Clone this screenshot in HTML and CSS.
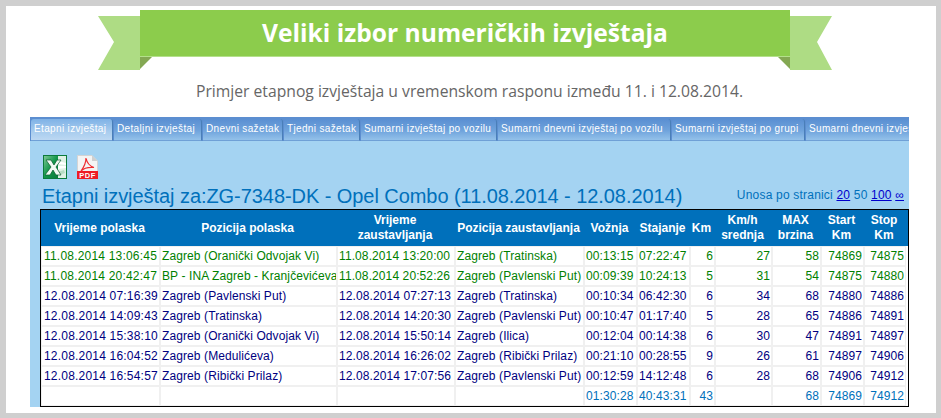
FILE: index.html
```html
<!DOCTYPE html>
<html lang="hr">
<head>
    <meta charset="UTF-8">
    <meta name="viewport" content="width=device-width, initial-scale=1.0">
    <title>Veliki izbor numeričkih izvještaja</title>
    <link rel="stylesheet" href="styles.css">
</head>
<body>
    <div class="sheet">
        <div class="banner">
            <svg class="tail tail-left" width="42" height="54" viewBox="0 0 42 54">
                <polygon points="0,0 42,0 42,54 0,54 16,26" fill="#aedc84"/>
            </svg>
            <svg class="tail tail-right" width="42" height="54" viewBox="0 0 42 54">
                <polygon points="0,0 42,0 27,26 42,54 0,54" fill="#aedc84"/>
            </svg>
            <svg class="fold fold-left" width="12" height="12" viewBox="0 0 12 12">
                <polygon points="0,0 12,0 0,12" fill="#84a853"/>
            </svg>
            <svg class="fold fold-right" width="12" height="12" viewBox="0 0 12 12">
                <polygon points="0,0 12,0 12,12" fill="#84a853"/>
            </svg>
            <h1>Veliki izbor numeričkih izvještaja</h1>
        </div>
        <p class="lead">Primjer etapnog izvještaja u vremenskom rasponu između 11. i 12.08.2014.</p>

        <div class="panel">
            <div class="tabs">
                <div class="tab active">Etapni izvještaj</div>
                <div class="tab w-detail">Detaljni izvještaj</div>
                <div class="tab w-day">Dnevni sažetak</div>
                <div class="tab w-week">Tjedni sažetak</div>
                <div class="tab w-vehicle">Sumarni izvještaj po vozilu</div>
                <div class="tab w-dayvehicle">Sumarni dnevni izvještaj po vozilu</div>
                <div class="tab w-group">Sumarni izvještaj po grupi</div>
                <div class="tab w-last">Sumarni dnevni izvještaj</div>
            </div>

            <div class="exports">
                <svg width="24" height="24" viewBox="0 0 24 24">
                    <defs>
                        <linearGradient id="xls" x1="0" y1="0" x2="1" y2="1">
                            <stop offset="0" stop-color="#7cc894"/>
                            <stop offset="0.5" stop-color="#12964a"/>
                            <stop offset="1" stop-color="#0b7a3c"/>
                        </linearGradient>
                    </defs>
                    <rect x="0.5" y="0.5" width="23" height="23" fill="#dff0e4" stroke="#0b7a3c"/>
                    <rect x="1" y="1" width="14" height="22" fill="url(#xls)"/>
                    <polygon points="15,6 23,8 23,10 15,9" fill="#ffffff"/>
                    <polygon points="15,11 23,11 23,13 15,14" fill="#ffffff"/>
                    <polygon points="15,17 21,15 22,18 16,20" fill="#b8dcc4"/>
                    <polygon points="3,5 8,5 11,10 14,5 18,5 13,12 18,20 13,20 10,15 7,20 2,20 8,12" fill="#f2faf4" stroke="#0a5c2e" stroke-width="0.7"/>
                </svg>
                <svg width="21" height="24" viewBox="0 0 21 24">
                    <polygon points="0.5,0.5 15,0.5 20.5,6 20.5,23.5 0.5,23.5" fill="#f4f4f4" stroke="#d4d4d4"/>
                    <polygon points="15,0.5 15,6 20.5,6" fill="#cfcfcf"/>
                    <path d="M9 3 C10 8 12 11 17 12.5 C12 12 7 13 4 16 C7 12 9 8 9 3 Z" fill="none" stroke="#ee2b2f" stroke-width="1.2"/>
                    <rect x="0" y="16" width="21" height="8" fill="#ee1c25"/>
                    <text class="pdf-label" x="10.5" y="23">PDF</text>
                </svg>
            </div>

            <div class="heading">
                <h2>Etapni izvještaj za:ZG-7348-DK - Opel Combo (11.08.2014 - 12.08.2014)</h2>
                <div class="paging">Unosa po stranici <a href="#">20</a> 50 <a href="#">100</a> <a href="#">∞</a></div>
            </div>

            <table class="report">
                <colgroup>
                    <col class="c-start"><col class="c-from"><col class="c-stop"><col class="c-to">
                    <col class="c-drive"><col class="c-idle"><col class="c-km"><col class="c-avg">
                    <col class="c-max"><col class="c-skm"><col class="c-ekm"><col class="c-end">
                </colgroup>
                <tr>
                    <th>Vrijeme polaska</th><th>Pozicija polaska</th><th>Vrijeme zaustavljanja</th><th>Pozicija zaustavljanja</th>
                    <th>Vožnja</th><th>Stajanje</th><th>Km</th><th>Km/h srednja</th><th>MAX brzina</th><th>Start Km</th><th>Stop Km</th><th class="end"></th>
                </tr>
                <tr class="green">
                    <td class="date">11.08.2014 13:06:45</td><td>Zagreb (Oranički Odvojak Vi)</td><td>11.08.2014 13:20:00</td><td>Zagreb (Tratinska)</td>
                    <td>00:13:15</td><td>07:22:47</td><td class="num">6</td><td class="num">27</td><td class="num">58</td><td class="num">74869</td><td class="num">74875</td><td class="end"></td>
                </tr>
                <tr class="green">
                    <td class="date">11.08.2014 20:42:47</td><td>BP - INA Zagreb - Kranjčevićeva</td><td>11.08.2014 20:52:26</td><td>Zagreb (Pavlenski Put)</td>
                    <td>00:09:39</td><td>10:24:13</td><td class="num">5</td><td class="num">31</td><td class="num">54</td><td class="num">74875</td><td class="num">74880</td><td class="end"></td>
                </tr>
                <tr>
                    <td class="date">12.08.2014 07:16:39</td><td>Zagreb (Pavlenski Put)</td><td>12.08.2014 07:27:13</td><td>Zagreb (Tratinska)</td>
                    <td>00:10:34</td><td>06:42:30</td><td class="num">6</td><td class="num">34</td><td class="num">68</td><td class="num">74880</td><td class="num">74886</td><td class="end"></td>
                </tr>
                <tr>
                    <td class="date">12.08.2014 14:09:43</td><td>Zagreb (Tratinska)</td><td>12.08.2014 14:20:30</td><td>Zagreb (Pavlenski Put)</td>
                    <td>00:10:47</td><td>01:17:40</td><td class="num">5</td><td class="num">28</td><td class="num">65</td><td class="num">74886</td><td class="num">74891</td><td class="end"></td>
                </tr>
                <tr>
                    <td class="date">12.08.2014 15:38:10</td><td>Zagreb (Oranički Odvojak Vi)</td><td>12.08.2014 15:50:14</td><td>Zagreb (Ilica)</td>
                    <td>00:12:04</td><td>00:14:38</td><td class="num">6</td><td class="num">30</td><td class="num">47</td><td class="num">74891</td><td class="num">74897</td><td class="end"></td>
                </tr>
                <tr>
                    <td class="date">12.08.2014 16:04:52</td><td>Zagreb (Medulićeva)</td><td>12.08.2014 16:26:02</td><td>Zagreb (Ribički Prilaz)</td>
                    <td>00:21:10</td><td>00:28:55</td><td class="num">9</td><td class="num">26</td><td class="num">61</td><td class="num">74897</td><td class="num">74906</td><td class="end"></td>
                </tr>
                <tr>
                    <td class="date">12.08.2014 16:54:57</td><td>Zagreb (Ribički Prilaz)</td><td>12.08.2014 17:07:56</td><td>Zagreb (Pavlenski Put)</td>
                    <td>00:12:59</td><td>14:12:48</td><td class="num">6</td><td class="num">28</td><td class="num">68</td><td class="num">74906</td><td class="num">74912</td><td class="end"></td>
                </tr>
                <tr class="totals">
                    <td></td><td></td><td></td><td></td>
                    <td>01:30:28</td><td>40:43:31</td><td class="num">43</td><td></td><td class="num">68</td><td class="num">74869</td><td class="num">74912</td><td class="end"></td>
                </tr>
            </table>
        </div>
    </div>
</body>
</html>
```

FILE: styles.css
```css
html, body {
    margin: 0;
    padding: 0;
}

body {
    width: 941px;
    height: 418px;
    overflow: hidden;
    background-color: #cfcfcf;
    font-family: "Liberation Sans", Arial, sans-serif;
}

.sheet {
    box-sizing: border-box;
    width: 930px;
    height: 407px;
    margin: 6px 0 0 6px;
    padding-top: 4px;
    background-color: #fff;
    overflow: hidden;
}

.banner {
    position: relative;
    width: 650px;
    height: 47px;
    margin-left: 134px;
    background-color: #8ccc4c;
    border-bottom: 1px solid #b4e08c;
    box-sizing: border-box;
}

.banner h1 {
    margin: 0;
    color: #fff;
    font-family: "Open Sans", sans-serif;
    font-size: 24.6px;
    font-weight: 700;
    line-height: 45px;
    text-align: center;
}

.tail {
    position: absolute;
    top: 6px;
}

.tail-left {
    left: -42px;
}

.tail-right {
    right: -42px;
}

.fold {
    position: absolute;
    top: 47px;
}

.fold-left {
    left: 0;
}

.fold-right {
    right: 0;
}

.lead {
    margin: 23px 3px 0 0;
    color: #666;
    font-family: "Open Sans", sans-serif;
    font-size: 15.7px;
    line-height: 22px;
    text-align: center;
}

.panel {
    width: 879px;
    height: 290px;
    margin: 15px 0 0 24px;
    background-color: #a4d3f2;
    overflow: hidden;
}

.tabs {
    display: flex;
    height: 24px;
    padding-left: 1px;
    border-top: 2px solid #5c8ed0;
    box-sizing: border-box;
    background-color: #5c8ed0;
    width: 900px;
}

.tab {
    flex: none;
    box-sizing: border-box;
    width: 83px;
    height: 22px;
    margin-right: 1px;
    padding-left: 3px;
    border-right: 1px solid #4a7fb8;
    border-bottom: 1px solid #6fa0d6;
    background: linear-gradient(#5a8fd2, #6fa3dc 55%, #93c1ea);
    color: #fff;
    font-size: 10px;
    letter-spacing: 0.35px;
    line-height: 20px;
    white-space: nowrap;
    overflow: hidden;
    border-radius: 3px 3px 0 0;
}

.tab.active {
    width: 82px;
    background: linear-gradient(#7fb2e6, #a8ccee 60%, #bcd8f2);
}

.w-detail {
    width: 88px;
}

.w-day {
    width: 80px;
}

.w-week {
    width: 76px;
}

.w-vehicle {
    width: 136px;
}

.w-dayvehicle {
    width: 173px;
}

.w-group {
    width: 133px;
}

.w-last {
    width: 110px;
}

.exports {
    display: flex;
    gap: 10px;
    height: 24px;
    padding: 14px 0 0 13px;
}

.pdf-label {
    fill: #fff;
    font-size: 7.5px;
    font-weight: 700;
    letter-spacing: 0.5px;
    text-anchor: middle;
}

.heading {
    display: flex;
    justify-content: space-between;
    align-items: flex-end;
    height: 30px;
    padding: 0 5px 0 12px;
    box-sizing: border-box;
    color: #0070bb;
}

.heading h2 {
    margin: 0;
    font-size: 20px;
    font-weight: 400;
    letter-spacing: -0.06px;
    line-height: 25px;
    white-space: nowrap;
}

.paging {
    font-size: 12px;
    line-height: 21px;
    padding-bottom: 3px;
    letter-spacing: 0.2px;
}

.paging a {
    color: #0000cc;
}

.report {
    table-layout: fixed;
    width: 869px;
    margin: 0 0 0 10px;
    border-collapse: separate;
    border-spacing: 0;
    border: 1px solid #000;
    background-color: #fff;
    color: #000080;
    font-size: 12px;
}

.c-start { width: 119px; }
.c-from { width: 177px; }
.c-stop { width: 118px; }
.c-to { width: 129px; }
.c-drive { width: 53px; }
.c-idle { width: 53px; }
.c-km { width: 25px; }
.c-avg { width: 57px; }
.c-max { width: 49px; }
.c-skm { width: 43px; }
.c-ekm { width: 42px; }
.c-end { width: 2px; }

.report th {
    height: 36px;
    padding: 0 3px 0 1px;
    background-color: #0070bb;
    color: #fff;
    font-size: 12px;
    line-height: 15px;
    font-weight: 700;
}

.report td {
    box-sizing: border-box;
    height: 20px;
    padding: 0 1px;
    border: 1px solid #f0f0f0;
    letter-spacing: 0.1px;
    white-space: nowrap;
    overflow: hidden;
}

.report td.date {
    padding-left: 2px;
    letter-spacing: 0.2px;
}

.report .num {
    text-align: right;
}

.report .green td {
    color: #008000;
}

.report .totals td {
    color: #0070bb;
}

.report .end {
    padding: 0;
    border: 0;
}
```
